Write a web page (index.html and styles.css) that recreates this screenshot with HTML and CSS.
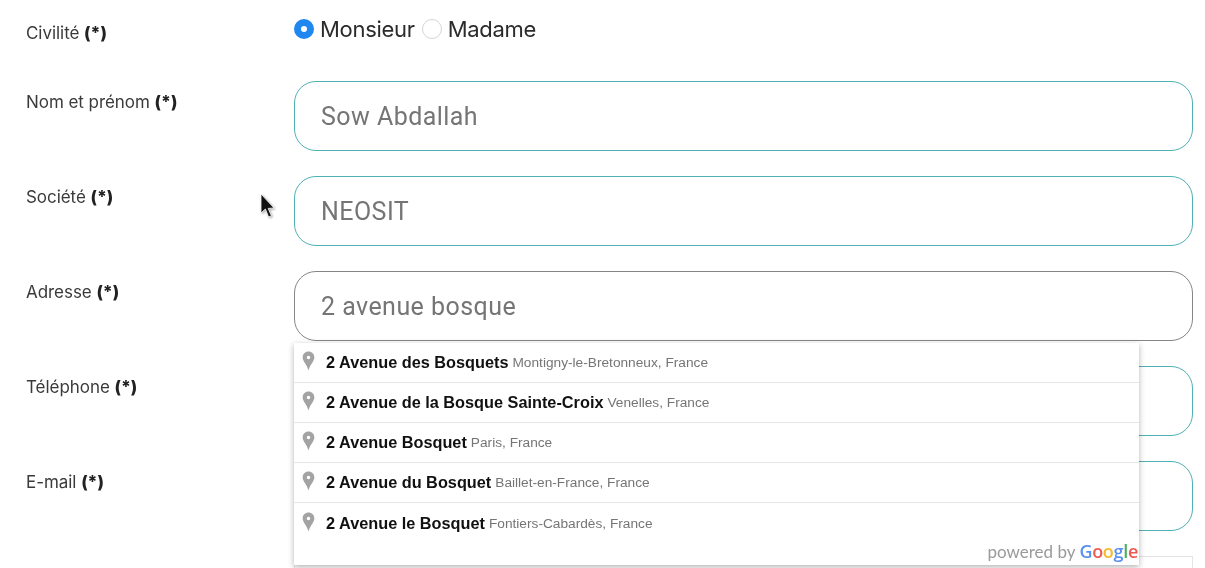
FILE: index.html
```html
<!DOCTYPE html>
<html lang="fr">
<head>
<meta charset="utf-8">
<title>Formulaire</title>
<link rel="stylesheet" href="styles.css">
</head>
<body>
<form class="form">
  <div class="row row-radio">
    <div class="label label-radio">Civilité <b>(*)</b></div>
    <div class="radios">
      <span class="radio radio-on"></span><span class="radio-text">Monsieur</span>
      <span class="radio"></span><span class="radio-text">Madame</span>
    </div>
  </div>
  <div class="row">
    <div class="label">Nom et prénom <b>(*)</b></div>
    <div class="input">Sow Abdallah</div>
  </div>
  <div class="row">
    <div class="label">Société <b>(*)</b></div>
    <div class="input">NEOSIT</div>
  </div>
  <div class="row">
    <div class="label">Adresse <b>(*)</b></div>
    <div class="input input-focus">2 avenue bosque</div>
  </div>
  <div class="row">
    <div class="label">Téléphone <b>(*)</b></div>
    <div class="input"></div>
  </div>
  <div class="row">
    <div class="label">E-mail <b>(*)</b></div>
    <div class="input"></div>
  </div>
  <div class="row row-last">
    <div class="label"></div>
    <div class="input input-square"></div>
  </div>
</form>

<div class="pac">
  <div class="pac-item"><svg class="pin" viewBox="0 0 12 18"><path d="M6 0.3C2.9 0.3 0.6 2.7 0.6 5.7C0.6 9.4 4.6 12 6 17.8C7.4 12 11.4 9.4 11.4 5.7C11.4 2.7 9.1 0.3 6 0.3ZM6 4.1A1.6 1.6 0 1 1 6 7.3A1.6 1.6 0 1 1 6 4.1Z" fill="#a3a3a3" fill-rule="evenodd"/></svg><b>2 Avenue des Bosquets</b> <span>Montigny-le-Bretonneux, France</span></div>
  <div class="pac-item"><svg class="pin" viewBox="0 0 12 18"><path d="M6 0.3C2.9 0.3 0.6 2.7 0.6 5.7C0.6 9.4 4.6 12 6 17.8C7.4 12 11.4 9.4 11.4 5.7C11.4 2.7 9.1 0.3 6 0.3ZM6 4.1A1.6 1.6 0 1 1 6 7.3A1.6 1.6 0 1 1 6 4.1Z" fill="#a3a3a3" fill-rule="evenodd"/></svg><b>2 Avenue de la Bosque Sainte-Croix</b> <span>Venelles, France</span></div>
  <div class="pac-item"><svg class="pin" viewBox="0 0 12 18"><path d="M6 0.3C2.9 0.3 0.6 2.7 0.6 5.7C0.6 9.4 4.6 12 6 17.8C7.4 12 11.4 9.4 11.4 5.7C11.4 2.7 9.1 0.3 6 0.3ZM6 4.1A1.6 1.6 0 1 1 6 7.3A1.6 1.6 0 1 1 6 4.1Z" fill="#a3a3a3" fill-rule="evenodd"/></svg><b>2 Avenue Bosquet</b> <span>Paris, France</span></div>
  <div class="pac-item"><svg class="pin" viewBox="0 0 12 18"><path d="M6 0.3C2.9 0.3 0.6 2.7 0.6 5.7C0.6 9.4 4.6 12 6 17.8C7.4 12 11.4 9.4 11.4 5.7C11.4 2.7 9.1 0.3 6 0.3ZM6 4.1A1.6 1.6 0 1 1 6 7.3A1.6 1.6 0 1 1 6 4.1Z" fill="#a3a3a3" fill-rule="evenodd"/></svg><b>2 Avenue du Bosquet</b> <span>Baillet-en-France, France</span></div>
  <div class="pac-item"><svg class="pin" viewBox="0 0 12 18"><path d="M6 0.3C2.9 0.3 0.6 2.7 0.6 5.7C0.6 9.4 4.6 12 6 17.8C7.4 12 11.4 9.4 11.4 5.7C11.4 2.7 9.1 0.3 6 0.3ZM6 4.1A1.6 1.6 0 1 1 6 7.3A1.6 1.6 0 1 1 6 4.1Z" fill="#a3a3a3" fill-rule="evenodd"/></svg><b>2 Avenue le Bosquet</b> <span>Fontiers-Cabardès, France</span></div>
  <div class="pac-logo">powered by <span class="g"><i class="blue">G</i><i class="red">o</i><i class="yellow">o</i><i class="blue">g</i><i class="green">l</i><i class="red">e</i></span></div>
</div>

<svg class="cursor" viewBox="0 0 16 26"><path d="M1 1V20L5.4 16L8.6 24L11.4 22.8L8.2 15.4L14 15Z" fill="#111" stroke="#fff" stroke-width="0.8"/></svg>
</body>
</html>
```
FILE: styles.css
```css
html, body {
  margin: 0;
  height: 568px;
  overflow: hidden;
  background: #fff;
}
body {
  position: relative;
  font-family: Roboto, "Liberation Sans", sans-serif;
  filter: blur(0.4px);
}
.form {
  display: flex;
  flex-direction: column;
  gap: 25px;
  padding: 16px 12px 0 26px;
}
.row {
  display: flex;
  align-items: flex-start;
}
.row-radio {
  height: 40px;
}
.row-last {
  height: 12px;
}
.label {
  width: 268px;
  flex: none;
  font-family: Inter, Roboto, sans-serif;
  font-size: 17px;
  line-height: 22px;
  letter-spacing: -0.05px;
  color: #3a3a3a;
  padding-top: 10px;
}
.label-radio {
  padding-top: 6px;
}
.label b {
  font-weight: 800;
  color: #222;
}
.radios {
  display: flex;
  align-items: center;
  height: 26px;
  font-family: Inter, Roboto, sans-serif;
  font-size: 22px;
  letter-spacing: -0.3px;
  color: #2b2b2b;
}
.radio {
  box-sizing: border-box;
  width: 20px;
  height: 20px;
  border-radius: 50%;
  border: 1px solid #d5d5d5;
  background: #fff;
  margin-right: 6px;
  flex: none;
}
.radio-on {
  border: 7px solid #1e87f0;
}
.radio-text {
  margin-right: 7px;
}
.input {
  box-sizing: border-box;
  flex: 1;
  height: 70px;
  padding: 0 26px;
  border: 1px solid #4fb0b4;
  border-radius: 22px;
  display: flex;
  align-items: center;
  font-size: 25px;
  letter-spacing: 0.45px;
  color: #757575;
  background: #fff;
}
.input-focus {
  border-color: #858585;
}
.input-square {
  height: 12px;
  border-color: #e4e4e4;
  border-bottom: 0;
  border-radius: 0;
}
.pac {
  position: absolute;
  left: 294px;
  top: 343px;
  width: 845px;
  height: 222px;
  background: #fff;
  box-shadow: 0 2px 6px rgba(0, 0, 0, 0.3);
  font-family: "Liberation Sans", Arial, sans-serif;
}
.pac-item {
  box-sizing: border-box;
  height: 40px;
  display: flex;
  align-items: center;
  gap: 4px;
  padding-left: 8px;
  border-bottom: 1px solid #e6e6e6;
  font-size: 16.3px;
  color: #111;
  white-space: pre;
}
.pac-item:nth-child(5) {
  border-bottom: 0;
}
.pac-item b {
  margin-left: 7px;
  font-weight: 700;
}
.pac-item span {
  font-size: 13.7px;
  color: #757575;
}
.pin {
  width: 13px;
  height: 20px;
  flex: none;
  margin-top: -3px;
}
.pac-logo {
  position: absolute;
  right: 1px;
  bottom: 3px;
  font-family: Lato, "Open Sans", sans-serif;
  font-size: 17px;
  color: #9a9a9a;
  line-height: 20px;
  white-space: nowrap;
}
.g {
  font-family: "Open Sans", sans-serif;
  font-size: 18px;
  font-weight: 600;
  letter-spacing: -0.3px;
}
.g i {
  font-style: normal;
}
.blue { color: #5a90f0; }
.red { color: #ee5b52; }
.yellow { color: #f4bb2c; }
.green { color: #45ae5f; }
.cursor {
  position: absolute;
  left: 260px;
  top: 193px;
  width: 16px;
  height: 26px;
  filter: drop-shadow(1px 1px 1px rgba(0, 0, 0, 0.35));
}
```
